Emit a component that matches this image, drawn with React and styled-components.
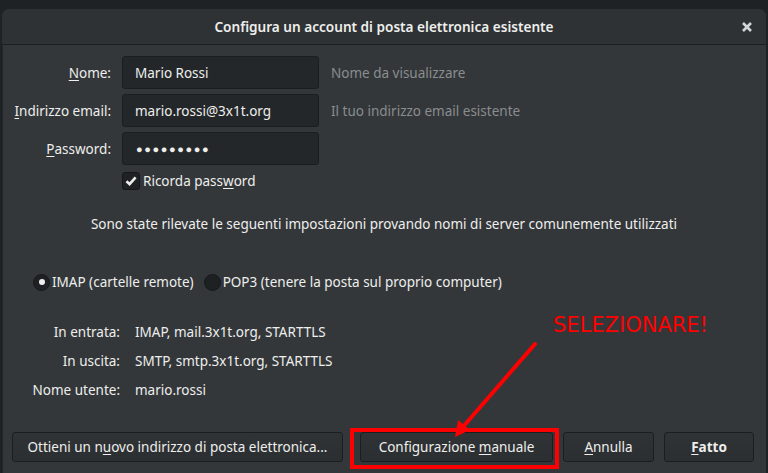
import React from "react";
import styled, { createGlobalStyle } from "styled-components";

const GlobalStyle = createGlobalStyle`
  html, body {
    margin: 0;
    padding: 0;
    background: #1f2224;
    overflow: hidden;
  }
  body {
    font-family: "Noto Sans", "Open Sans", sans-serif;
    font-size: 13.5px;
    color: #eeeeec;
  }
`;

const Page = styled.div`
  position: relative;
  width: 768px;
  height: 473px;
  padding: 9px 2px 0 2px;
  box-sizing: border-box;
  overflow: hidden;
`;

const Window = styled.div`
  background: #33373a;
  border-radius: 7px 7px 0 0;
  height: 480px;
  box-shadow: inset 1px 0 0 #232628;
`;

const TitleBar = styled.div`
  height: 35px;
  display: flex;
  align-items: center;
  justify-content: center;
  position: relative;
  background: #2e3235;
  border-radius: 7px 7px 0 0;
  border-bottom: 1px solid #1c1e1f;
  font-weight: 600;
  font-size: 13.6px;
  color: #eeeeec;
`;

const CloseButton = styled.span`
  position: absolute;
  right: 12px;
  top: 11px;
  width: 14px;
  height: 14px;
  display: flex;
`;

const Body = styled.div`
  padding-top: 11px;
`;

const FormGrid = styled.div`
  display: grid;
  grid-template-columns: 109px 197px auto;
  column-gap: 11px;
  row-gap: 5px;
  align-items: center;
`;

const Label = styled.label`
  text-align: right;
  color: #eeeeec;
`;

const TextInput = styled.div`
  height: 33px;
  box-sizing: border-box;
  background: #232729;
  border: 1px solid #1b1e1f;
  border-radius: 3px;
  display: flex;
  align-items: center;
  padding-left: ${(p) => (p.$secret ? "13px" : "12px")};
  color: #eeeeec;
  letter-spacing: ${(p) => (p.$secret ? "1.6px" : "0")};
  font-size: ${(p) => (p.$secret ? "11px" : "13.5px")};
`;

const Hint = styled.span`
  color: #8a8d8f;
  padding-left: 1px;
`;

const CheckRow = styled.div`
  display: flex;
  align-items: center;
  gap: 3px;
  margin: 7px 0 0 120px;
`;

const CheckBox = styled.span`
  width: 16px;
  height: 16px;
  border-radius: 3px;
  background: #1f2224;
  border: 1px solid #141617;
  display: flex;
  align-items: center;
  justify-content: center;
`;

const Info = styled.p`
  margin: 25px 0 0 0;
  text-align: center;
`;

const RadioRow = styled.div`
  display: flex;
  align-items: center;
  margin: 40px 0 0 31px;
`;

const RadioOption = styled.span`
  display: flex;
  align-items: center;
  gap: 2px;
  margin-right: ${(p) => p.$gap || 0}px;
`;

const Radio = styled.span`
  width: 15px;
  height: 15px;
  border-radius: 50%;
  background: #1e2123;
  border: 1px solid #17191a;
  display: flex;
  align-items: center;
  justify-content: center;
  &::after {
    content: "";
    display: ${(p) => (p.$checked ? "block" : "none")};
    width: 6px;
    height: 6px;
    border-radius: 50%;
    background: #eeeeec;
  }
`;

const Settings = styled.div`
  display: grid;
  grid-template-columns: 118px auto;
  column-gap: 15px;
  row-gap: 10px;
  margin-top: 32px;
  line-height: 19px;
`;

const SettingLabel = styled.span`
  text-align: right;
`;

const ButtonRow = styled.div`
  display: flex;
  align-items: center;
  padding: 0 12px 0 10px;
  margin-top: 32px;
`;

const ButtonGroup = styled.div`
  display: flex;
  gap: 10px;
  margin-left: auto;
`;

const Button = styled.button`
  width: ${(p) => p.$width}px;
  height: 30px;
  background: linear-gradient(#2f3336, #2b2f31);
  border: 1px solid #1b1e1f;
  border-radius: 3px;
  color: #eeeeec;
  font-family: inherit;
  font-size: 13.5px;
  font-weight: ${(p) => (p.$bold ? 700 : 400)};
  padding: 0;
`;

const Key = styled.span`
  text-decoration: underline;
  text-underline-offset: 2px;
`;

const Callout = styled.div`
  position: absolute;
  left: 553px;
  top: 313px;
  color: #ff0000;
  font-family: "DejaVu Sans", sans-serif;
  font-size: 21px;
`;

const Highlight = styled.div`
  position: absolute;
  left: 350px;
  top: 428px;
  width: 209px;
  height: 41px;
  box-sizing: border-box;
  border: 4px solid #ff0000;
`;

const ArrowLayer = styled.svg`
  position: absolute;
  left: 0;
  top: 0;
  pointer-events: none;
`;

export default function App() {
  return (
    <>
      <GlobalStyle />
      <Page>
        <Window>
          <TitleBar>
            Configura un account di posta elettronica esistente
            <CloseButton>
              <svg width="14" height="14" viewBox="0 0 14 14">
                <path d="M3 3 L11 11 M11 3 L3 11" stroke="#d3d6d8" strokeWidth="2.6" />
              </svg>
            </CloseButton>
          </TitleBar>
          <Body>
            <FormGrid>
              <Label><Key>N</Key>ome:</Label>
              <TextInput>Mario Rossi</TextInput>
              <Hint>Nome da visualizzare</Hint>
              <Label><Key>I</Key>ndirizzo email:</Label>
              <TextInput>mario.rossi@3x1t.org</TextInput>
              <Hint>Il tuo indirizzo email esistente</Hint>
              <Label><Key>P</Key>assword:</Label>
              <TextInput $secret>●●●●●●●●●</TextInput>
              <span />
            </FormGrid>
            <CheckRow>
              <CheckBox>
                <svg width="14" height="14" viewBox="0 0 14 14">
                  <path d="M2.5 7.2 L5.6 10.2 L11.6 3.4" fill="none" stroke="#eeeeec" strokeWidth="2.6" />
                </svg>
              </CheckBox>
              <span>Ricorda pass<Key>w</Key>ord</span>
            </CheckRow>
            <Info>
              Sono state rilevate le seguenti impostazioni provando nomi di server comunemente utilizzati
            </Info>
            <RadioRow>
              <RadioOption $gap={10}>
                <Radio $checked />
                IMAP (cartelle remote)
              </RadioOption>
              <RadioOption>
                <Radio />
                POP3 (tenere la posta sul proprio computer)
              </RadioOption>
            </RadioRow>
            <Settings>
              <SettingLabel>In entrata:</SettingLabel>
              <span>IMAP, mail.3x1t.org, STARTTLS</span>
              <SettingLabel>In uscita:</SettingLabel>
              <span>SMTP, smtp.3x1t.org, STARTTLS</span>
              <SettingLabel>Nome utente:</SettingLabel>
              <span>mario.rossi</span>
            </Settings>
            <ButtonRow>
              <Button $width={331}>
                Ottieni un n<Key>u</Key>ovo indirizzo di posta elettronica...
              </Button>
              <ButtonGroup>
                <Button $width={193}>
                  Configurazione <Key>m</Key>anuale
                </Button>
                <Button $width={91}>
                  <Key>A</Key>nnulla
                </Button>
                <Button $width={90} $bold>
                  <Key>F</Key>atto
                </Button>
              </ButtonGroup>
            </ButtonRow>
          </Body>
        </Window>
        <Callout>SELEZIONARE!</Callout>
        <Highlight />
        <ArrowLayer width="768" height="473" viewBox="0 0 768 473">
          <line x1="535" y1="344" x2="462" y2="428" stroke="#ff0000" strokeWidth="4" strokeLinecap="round" />
          <polygon points="455,437 458,420 470,430" fill="#ff0000" />
        </ArrowLayer>
      </Page>
    </>
  );
}
